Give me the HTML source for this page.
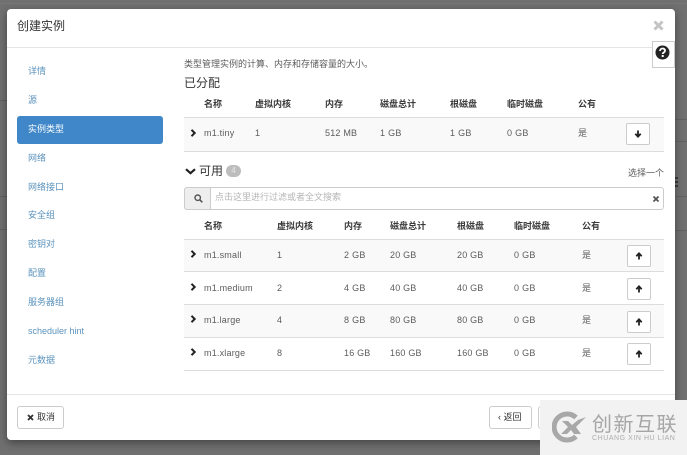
<!DOCTYPE html>
<html><head><meta charset="utf-8"><style>
*{box-sizing:border-box}
html,body{margin:0;padding:0}
body{width:687px;height:455px;overflow:hidden;position:relative;background:#707070;font-family:"Liberation Sans","Noto Sans CJK SC",sans-serif;color:#333}
.a{position:absolute;white-space:nowrap}
.t{font-size:9px;line-height:12px;color:#5c5c5c}
.h{font-size:9px;line-height:12px;color:#3a3a3a;font-weight:bold}
.nav{position:absolute;left:28px;font-size:9px;line-height:12px;color:#5b93bd;white-space:nowrap}
.line{position:absolute;height:1px;background:#ddd}
.row{position:absolute;left:184px;width:480px;background:#f9f9f9}
.btn{position:absolute;width:24px;height:22px;background:#fff;border:1px solid #ccc;border-radius:2px}
.btn svg{position:absolute;left:7px;top:6px}
svg{display:block}
</style></head><body>
<div class="line" style="left:0;top:3px;width:687px;background:#777"></div>
<div class="line" style="left:675px;top:119px;width:12px;background:#626262"></div>
<div class="line" style="left:675px;top:141px;width:12px;background:#626262"></div>
<div class="line" style="left:675px;top:196px;width:12px;background:#626262"></div>
<div class="line" style="left:675px;top:230px;width:12px;background:#626262"></div>
<div class="line" style="left:0;top:100px;width:7px;background:#626262"></div>
<div class="line" style="left:0;top:196px;width:7px;background:#626262"></div>
<div class="line" style="left:0;top:229px;width:7px;background:#626262"></div>
<div class="a" style="left:675px;top:177px;width:3px;height:12px;background:repeating-linear-gradient(#3c3c3c 0 2px,#707070 2px 4px)"></div>

<div class="a" style="left:7px;top:9px;width:668px;height:431px;background:#fff;border-radius:4px;box-shadow:0 3px 9px rgba(0,0,0,.4)"></div>

<div class="a" style="left:17px;top:17px;font-size:12px;line-height:18px;color:#333">创建实例</div>
<svg class="a" style="left:653px;top:20px" width="11" height="11" viewBox="0 0 11 11"><path d="M1.500 1.500l8 8M9.500 1.500l-8 8" stroke="#c4c4c4" stroke-width="3"/></svg>
<div class="line" style="left:7px;top:47px;width:668px;background:#e5e5e5"></div>

<div class="a" style="left:652px;top:41px;width:23px;height:27px;background:#fff;border:1px solid #ccc"></div>
<svg class="a" style="left:655px;top:45px" width="15" height="15" viewBox="0 0 15 15"><circle cx="7.500" cy="7.500" r="7" fill="#222"/><path d="M5 6c0-3.300 5-3.300 5-.3 0 1.800-2.300 1.800-2.300 3.300" fill="none" stroke="#fff" stroke-width="1.800"/><rect x="6.700" y="10" width="2" height="2" fill="#fff"/></svg>

<div class="nav" style="top:65px">详情</div>
<div class="nav" style="top:94px">源</div>
<div class="a" style="left:17px;top:116px;width:146px;height:28px;background:#3f87c8;border-radius:3px"></div>
<div class="nav" style="top:123px;color:#fff">实例类型</div>
<div class="nav" style="top:152px">网络</div>
<div class="nav" style="top:181px">网络接口</div>
<div class="nav" style="top:209px">安全组</div>
<div class="nav" style="top:238px">密钥对</div>
<div class="nav" style="top:267px">配置</div>
<div class="nav" style="top:296px">服务器组</div>
<div class="nav" style="top:325px">scheduler hint</div>
<div class="nav" style="top:354px">元数据</div>

<div class="a t" style="left:184px;top:58px">类型管理实例的计算、内存和存储容量的大小。</div>
<div class="a" style="left:184px;top:75px;font-size:12px;line-height:17px;color:#333">已分配</div>

<div class="a h" style="left:204px;top:98px">名称</div>
<div class="a h" style="left:255px;top:98px">虚拟内核</div>
<div class="a h" style="left:325px;top:98px">内存</div>
<div class="a h" style="left:380px;top:98px">磁盘总计</div>
<div class="a h" style="left:450px;top:98px">根磁盘</div>
<div class="a h" style="left:507px;top:98px">临时磁盘</div>
<div class="a h" style="left:578px;top:98px">公有</div>
<div class="row" style="top:117px;height:35px;border-top:1px solid #ddd;border-bottom:1px solid #ddd"></div>
<svg class="a" style="left:190px;top:129px" width="7" height="8" viewBox="0 0 7 8"><path d="M1.500 .8l3.200 3.200-3.200 3.200" fill="none" stroke="#222" stroke-width="2"/></svg>
<div class="a t" style="left:204px;top:127px;letter-spacing:.2px">m1.tiny</div>
<div class="a t" style="left:255px;top:127px">1</div>
<div class="a t" style="left:325px;top:127px;letter-spacing:.2px">512 MB</div>
<div class="a t" style="left:380px;top:127px;letter-spacing:.3px">1 GB</div>
<div class="a t" style="left:450px;top:127px;letter-spacing:.3px">1 GB</div>
<div class="a t" style="left:507px;top:127px;letter-spacing:.3px">0 GB</div>
<div class="a t" style="left:578px;top:127px">是</div>
<div class="btn" style="left:626px;top:123px"><svg width="8" height="8" viewBox="0 0 8 8"><path d="M4 .5v6M1.300 3.800l2.700 2.900 2.700-2.900" fill="none" stroke="#222" stroke-width="1.800"/></svg></div>

<svg class="a" style="left:185px;top:168px" width="11" height="7" viewBox="0 0 11 7"><path d="M1 1.200l4.500 4 4.500-4" fill="none" stroke="#222" stroke-width="2.200"/></svg>
<div class="a" style="left:199px;top:163px;font-size:12px;line-height:16px;color:#333">可用</div>
<div class="a" style="left:226px;top:165px;width:15px;height:12px;border-radius:6px;background:#bdbdbd;color:#e8e8e8;font-size:8px;line-height:12px;text-align:center">4</div>
<div class="a t" style="left:628px;top:167px">选择一个</div>

<div class="a" style="left:184px;top:187px;width:480px;height:23px;border:1px solid #ccc;border-radius:3px;background:#fff"></div>
<div class="a" style="left:184px;top:187px;width:27px;height:23px;border:1px solid #ccc;border-radius:3px 0 0 3px;background:#eee"></div>
<svg class="a" style="left:194px;top:194px" width="9" height="9" viewBox="0 0 9 9"><circle cx="3.700" cy="3.700" r="2.700" fill="none" stroke="#555" stroke-width="1.400"/><path d="M5.700 5.700l2.600 2.600" stroke="#555" stroke-width="1.600"/></svg>
<div class="a" style="left:215px;top:191px;font-size:9px;line-height:12px;color:#b5b5b5">点击这里进行过滤或者全文搜索</div>
<svg class="a" style="left:652px;top:195px" width="8" height="8" viewBox="0 0 8 8"><path d="M1.500 1.500l5 5M6.500 1.500l-5 5" stroke="#555" stroke-width="1.800"/></svg>

<div class="a h" style="left:204px;top:220px">名称</div>
<div class="a h" style="left:277px;top:220px">虚拟内核</div>
<div class="a h" style="left:344px;top:220px">内存</div>
<div class="a h" style="left:390px;top:220px">磁盘总计</div>
<div class="a h" style="left:457px;top:220px">根磁盘</div>
<div class="a h" style="left:514px;top:220px">临时磁盘</div>
<div class="a h" style="left:582px;top:220px">公有</div>

<div class="row" style="top:239px;height:33px;border-top:1px solid #ddd"></div>
<div class="line" style="left:184px;top:271px;width:480px"></div>
<div class="row" style="top:304px;height:34px;border-top:1px solid #ddd"></div>
<div class="line" style="left:184px;top:337px;width:480px"></div>
<div class="line" style="left:184px;top:370px;width:480px"></div>

<svg class="a" style="left:190px;top:250px" width="7" height="8" viewBox="0 0 7 8"><path d="M1.500 .8l3.200 3.200-3.200 3.200" fill="none" stroke="#222" stroke-width="2"/></svg>
<div class="a t" style="left:204px;top:249px;letter-spacing:.2px">m1.small</div>
<div class="a t" style="left:277px;top:249px">1</div>
<div class="a t" style="left:344px;top:249px;letter-spacing:.3px">2 GB</div>
<div class="a t" style="left:390px;top:249px;letter-spacing:.2px">20 GB</div>
<div class="a t" style="left:457px;top:249px;letter-spacing:.2px">20 GB</div>
<div class="a t" style="left:514px;top:249px;letter-spacing:.3px">0 GB</div>
<div class="a t" style="left:582px;top:249px">是</div>
<div class="btn" style="left:627px;top:245px"><svg width="8" height="8" viewBox="0 0 8 8"><path d="M4 7.500v-6M1.300 4.200l2.700-2.900 2.700 2.900" fill="none" stroke="#222" stroke-width="1.800"/></svg></div>

<svg class="a" style="left:190px;top:283px" width="7" height="8" viewBox="0 0 7 8"><path d="M1.500 .8l3.200 3.200-3.200 3.200" fill="none" stroke="#222" stroke-width="2"/></svg>
<div class="a t" style="left:204px;top:282px;letter-spacing:.2px">m1.medium</div>
<div class="a t" style="left:277px;top:282px">2</div>
<div class="a t" style="left:344px;top:282px;letter-spacing:.3px">4 GB</div>
<div class="a t" style="left:390px;top:282px;letter-spacing:.2px">40 GB</div>
<div class="a t" style="left:457px;top:282px;letter-spacing:.2px">40 GB</div>
<div class="a t" style="left:514px;top:282px;letter-spacing:.3px">0 GB</div>
<div class="a t" style="left:582px;top:282px">是</div>
<div class="btn" style="left:627px;top:278px"><svg width="8" height="8" viewBox="0 0 8 8"><path d="M4 7.500v-6M1.300 4.200l2.700-2.900 2.700 2.900" fill="none" stroke="#222" stroke-width="1.800"/></svg></div>

<svg class="a" style="left:190px;top:315px" width="7" height="8" viewBox="0 0 7 8"><path d="M1.500 .8l3.200 3.200-3.200 3.200" fill="none" stroke="#222" stroke-width="2"/></svg>
<div class="a t" style="left:204px;top:314px;letter-spacing:.2px">m1.large</div>
<div class="a t" style="left:277px;top:314px">4</div>
<div class="a t" style="left:344px;top:314px;letter-spacing:.3px">8 GB</div>
<div class="a t" style="left:390px;top:314px;letter-spacing:.2px">80 GB</div>
<div class="a t" style="left:457px;top:314px;letter-spacing:.2px">80 GB</div>
<div class="a t" style="left:514px;top:314px;letter-spacing:.3px">0 GB</div>
<div class="a t" style="left:582px;top:314px">是</div>
<div class="btn" style="left:627px;top:311px"><svg width="8" height="8" viewBox="0 0 8 8"><path d="M4 7.500v-6M1.300 4.200l2.700-2.900 2.700 2.900" fill="none" stroke="#222" stroke-width="1.800"/></svg></div>

<svg class="a" style="left:190px;top:348px" width="7" height="8" viewBox="0 0 7 8"><path d="M1.500 .8l3.200 3.200-3.200 3.200" fill="none" stroke="#222" stroke-width="2"/></svg>
<div class="a t" style="left:204px;top:347px;letter-spacing:.2px">m1.xlarge</div>
<div class="a t" style="left:277px;top:347px">8</div>
<div class="a t" style="left:344px;top:347px;letter-spacing:.2px">16 GB</div>
<div class="a t" style="left:390px;top:347px;letter-spacing:.2px">160 GB</div>
<div class="a t" style="left:457px;top:347px;letter-spacing:.2px">160 GB</div>
<div class="a t" style="left:514px;top:347px;letter-spacing:.3px">0 GB</div>
<div class="a t" style="left:582px;top:347px">是</div>
<div class="btn" style="left:627px;top:343px"><svg width="8" height="8" viewBox="0 0 8 8"><path d="M4 7.500v-6M1.300 4.200l2.700-2.900 2.700 2.900" fill="none" stroke="#222" stroke-width="1.800"/></svg></div>

<div class="line" style="left:7px;top:394px;width:668px;background:#e5e5e5"></div>
<div class="a" style="left:17px;top:406px;width:47px;height:23px;border:1px solid #ccc;border-radius:3px;background:#fff"></div>
<svg class="a" style="left:27px;top:414px" width="7" height="7" viewBox="0 0 7 7"><path d="M1 1l5 5M6 1l-5 5" stroke="#333" stroke-width="1.800"/></svg>
<div class="a" style="left:37px;top:411px;font-size:9px;line-height:12px;color:#333">取消</div>
<div class="a" style="left:489px;top:406px;width:43px;height:23px;border:1px solid #ccc;border-radius:3px;background:#fff"></div>
<div class="a" style="left:498px;top:411px;font-size:9px;line-height:12px;color:#333">‹ 返回</div>
<div class="a" style="left:538px;top:406px;width:20px;height:23px;border:1px solid #ccc;border-radius:3px;background:#fff"></div>

<div class="a" style="left:540px;top:400px;width:147px;height:55px;background:#f2f2f2"></div>
<svg class="a" style="left:552px;top:410px" width="36" height="34" viewBox="0 0 36 34"><path d="M24 7.500A13 13 0 1 0 24 26.500" fill="none" stroke="#a8a8a8" stroke-width="5"/><path d="M10 11h6l4 4 6-5 8-3-10 10 5 7-7 0-3-4-4 4-6 0 7-7z" fill="#a8a8a8"/></svg>
<div class="a" style="left:592px;top:414px;font-size:20px;line-height:22px;color:#a6a6a6;letter-spacing:1.500px">创新互联</div>
<div class="a" style="left:592px;top:435px;font-size:7px;line-height:8px;color:#adadad;letter-spacing:.55px">CHUANG XIN HU LIAN</div>
</body></html>
